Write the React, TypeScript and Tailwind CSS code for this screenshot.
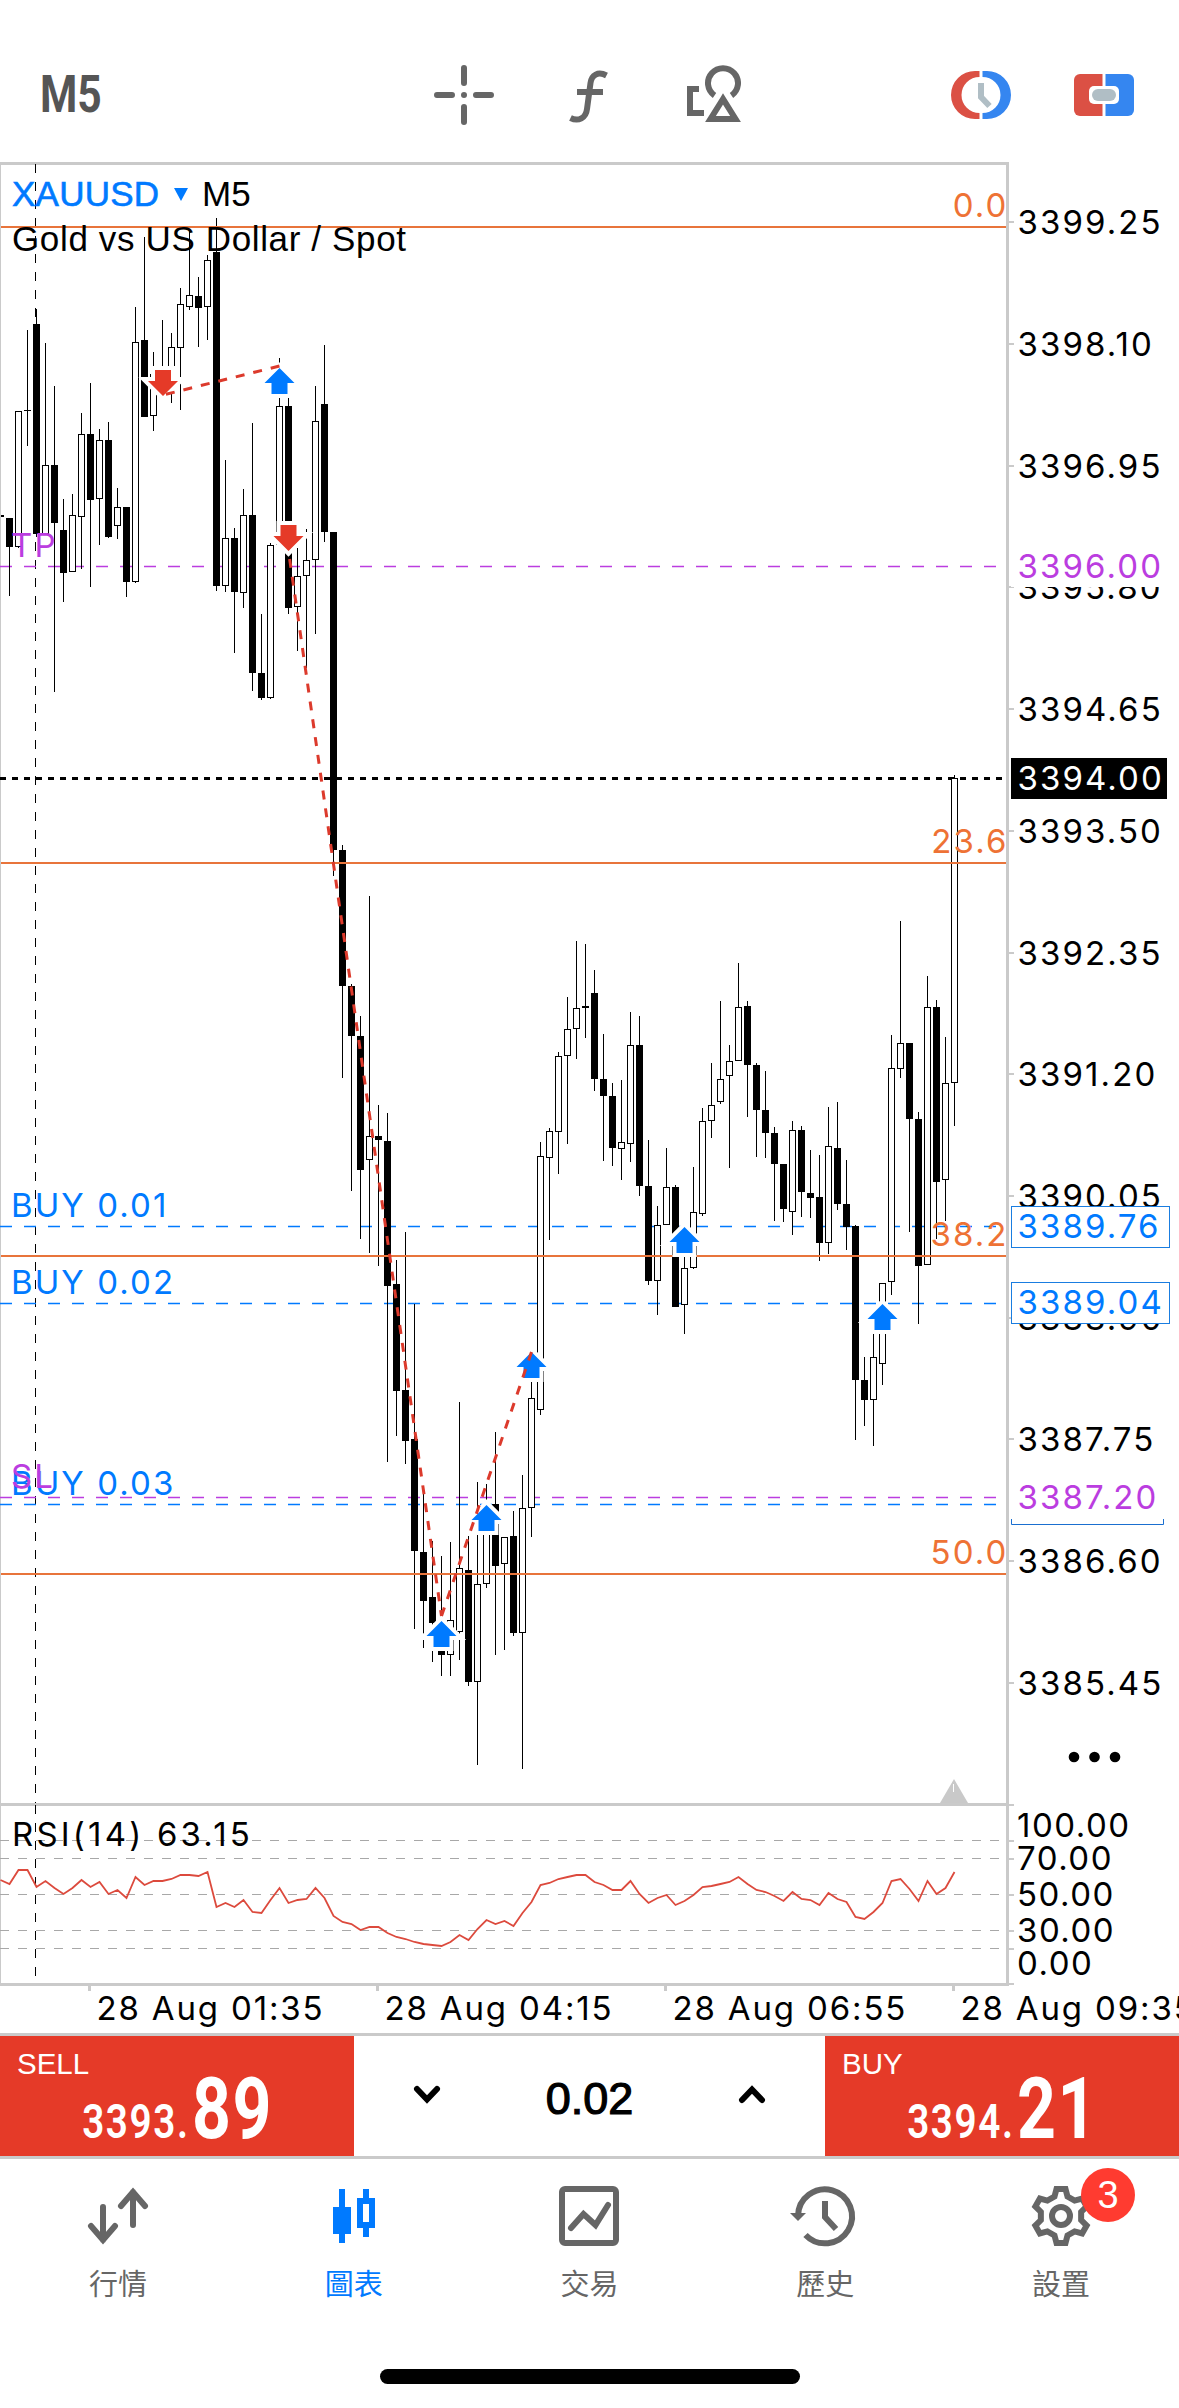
import { clsx } from "clsx";
import type { ReactNode } from "react";

// [high, body top, body bottom, low, type] - type 1 is a bearish (filled) bar
type Candle = [number, number, number, number, 0 | 1];

const STEP = 9;

const candles: Candle[] = [
  [518, 518, 547, 596, 1],
  [411, 411, 547, 548, 0],
  [330, 410, 411, 446, 1],
  [309, 324, 534, 537, 1],
  [343, 465, 534, 534, 0],
  [386, 465, 523, 692, 1],
  [499, 530, 573, 602, 1],
  [494, 515, 572, 572, 0],
  [413, 434, 517, 569, 0],
  [383, 434, 500, 587, 1],
  [429, 440, 499, 545, 0],
  [422, 440, 537, 538, 1],
  [488, 507, 526, 539, 0],
  [507, 507, 582, 597, 1],
  [307, 342, 582, 583, 0],
  [237, 340, 417, 417, 1],
  [352, 374, 416, 431, 0],
  [320, 374, 395, 395, 1],
  [333, 347, 385, 403, 0],
  [288, 304, 348, 410, 0],
  [231, 295, 307, 310, 0],
  [277, 296, 308, 347, 1],
  [255, 260, 307, 340, 0],
  [218, 252, 586, 591, 1],
  [460, 538, 586, 592, 0],
  [528, 538, 592, 653, 1],
  [489, 515, 593, 608, 0],
  [423, 515, 673, 691, 1],
  [614, 673, 698, 700, 1],
  [543, 545, 698, 699, 0],
  [358, 406, 545, 545, 0],
  [397, 406, 608, 614, 1],
  [548, 576, 607, 651, 0],
  [529, 560, 576, 668, 0],
  [386, 421, 560, 634, 0],
  [345, 404, 532, 542, 1],
  [532, 532, 850, 876, 1],
  [845, 850, 986, 1078, 1],
  [984, 986, 1036, 1191, 1],
  [1016, 1036, 1170, 1239, 1],
  [896, 1136, 1160, 1253, 0],
  [1105, 1136, 1140, 1266, 1],
  [1113, 1141, 1286, 1462, 1],
  [1260, 1284, 1391, 1436, 1],
  [1232, 1390, 1441, 1464, 1],
  [1304, 1439, 1551, 1629, 1],
  [1494, 1552, 1601, 1648, 1],
  [1541, 1597, 1623, 1662, 1],
  [1556, 1623, 1655, 1676, 1],
  [1542, 1620, 1655, 1676, 0],
  [1402, 1568, 1632, 1660, 0],
  [1536, 1570, 1682, 1686, 1],
  [1482, 1584, 1682, 1765, 0],
  [1484, 1505, 1584, 1588, 0],
  [1432, 1504, 1566, 1655, 1],
  [1537, 1537, 1564, 1650, 0],
  [1511, 1536, 1633, 1636, 1],
  [1475, 1508, 1633, 1769, 0],
  [1370, 1398, 1508, 1537, 0],
  [1142, 1156, 1410, 1415, 0],
  [1128, 1131, 1158, 1240, 0],
  [1052, 1056, 1132, 1174, 0],
  [997, 1029, 1056, 1144, 0],
  [941, 1008, 1029, 1059, 0],
  [944, 1006, 1008, 1038, 1],
  [970, 993, 1079, 1091, 1],
  [1034, 1079, 1096, 1161, 1],
  [1083, 1096, 1148, 1166, 1],
  [1080, 1142, 1149, 1180, 0],
  [1012, 1045, 1144, 1162, 0],
  [1016, 1045, 1186, 1196, 1],
  [1140, 1186, 1281, 1285, 1],
  [1206, 1225, 1281, 1315, 0],
  [1148, 1187, 1225, 1225, 0],
  [1185, 1187, 1307, 1307, 1],
  [1250, 1268, 1305, 1334, 0],
  [1167, 1212, 1268, 1269, 0],
  [1108, 1121, 1214, 1216, 0],
  [1063, 1105, 1121, 1138, 0],
  [1001, 1079, 1102, 1104, 0],
  [1045, 1061, 1076, 1168, 0],
  [963, 1007, 1061, 1061, 0],
  [1001, 1006, 1065, 1117, 1],
  [1063, 1065, 1110, 1157, 1],
  [1071, 1110, 1133, 1158, 1],
  [1127, 1133, 1164, 1221, 1],
  [1164, 1164, 1209, 1222, 1],
  [1121, 1130, 1212, 1235, 0],
  [1126, 1130, 1192, 1217, 1],
  [1150, 1193, 1198, 1218, 1],
  [1155, 1197, 1243, 1261, 1],
  [1107, 1146, 1243, 1254, 0],
  [1102, 1148, 1204, 1210, 1],
  [1160, 1204, 1227, 1250, 1],
  [1225, 1226, 1380, 1440, 1],
  [1357, 1380, 1400, 1426, 1],
  [1333, 1357, 1400, 1446, 0],
  [1283, 1283, 1364, 1385, 0],
  [1035, 1068, 1282, 1295, 0],
  [921, 1043, 1069, 1078, 0],
  [1043, 1043, 1119, 1232, 1],
  [1112, 1119, 1266, 1324, 1],
  [976, 1007, 1265, 1265, 0],
  [1000, 1007, 1182, 1239, 1],
  [1037, 1083, 1180, 1221, 0],
  [775, 778, 1083, 1126, 0],
];

const rsi = [
  1880, 1884, 1870, 1870, 1887, 1881, 1888, 1894, 1888, 1880, 1887, 1882, 1894, 1890, 1898, 1877,
  1885, 1881, 1881, 1879, 1875, 1875, 1876, 1872, 1907, 1903, 1907, 1900, 1912, 1913, 1900, 1888,
  1903, 1900, 1899, 1888, 1898, 1916, 1922, 1924, 1930, 1927, 1927, 1933, 1937, 1939, 1942, 1944,
  1945, 1946, 1942, 1935, 1940, 1929, 1920, 1924, 1921, 1926, 1913, 1902, 1885, 1883, 1879, 1877,
  1875, 1875, 1882, 1885, 1890, 1890, 1881, 1894, 1903, 1898, 1895, 1905, 1901, 1895, 1887, 1886,
  1884, 1882, 1877, 1884, 1890, 1892, 1896, 1901, 1892, 1899, 1900, 1905, 1893, 1899, 1902, 1917,
  1919, 1912, 1903, 1881, 1879, 1889, 1901, 1881, 1894, 1888, 1872,
];

const prices = [
  "3399.25",
  "3398.10",
  "3396.95",
  "3395.80",
  "3394.65",
  "3393.50",
  "3392.35",
  "3391.20",
  "3390.05",
  "3388.90",
  "3387.75",
  "3386.60",
  "3385.45",
];

const fibLevels = [
  { label: "0.0", y: 227 },
  { label: "23.6", y: 863 },
  { label: "38.2", y: 1256 },
  { label: "50.0", y: 1574 },
];

const tradeLevels = [
  { label: "TP", y: 566, color: "#bb3de0" },
  { label: "BUY 0.01", y: 1226, color: "#007aff" },
  { label: "BUY 0.02", y: 1303, color: "#007aff" },
  { label: "BUY 0.03", y: 1504, color: "#007aff" },
  { label: "SL", y: 1497, color: "#bb3de0" },
];

const rsiLevels = [1840, 1858, 1894, 1930, 1948];

const rsiLabels = [
  { label: "100.00", y: 1837 },
  { label: "70.00", y: 1869.5 },
  { label: "50.00", y: 1905.5 },
  { label: "30.00", y: 1941.5 },
  { label: "0.00", y: 1974.5 },
];

const dates = [
  { label: "28 Aug 01:35", x: 88 },
  { label: "28 Aug 04:15", x: 376 },
  { label: "28 Aug 06:55", x: 664 },
  { label: "28 Aug 09:35", x: 952 },
];

const buys = [
  [279.5, 368],
  [684.5, 1227],
  [441.5, 1621],
  [486.5, 1505],
  [531.5, 1352],
  [882.5, 1304],
];

const sells = [
  [163, 396],
  [288.5, 551],
];

interface ArrowProps {
  x: number;
  y: number;
  down?: boolean;
}

function Arrow({ x, y, down }: ArrowProps) {
  const points = "0,0 15,15 8,15 8,26 -8,26 -8,15 -15,15";
  return (
    <g transform={`translate(${x} ${y}) scale(1 ${down ? -1 : 1})`}>
      <polygon points={points} fill="#fff" stroke="#fff" strokeWidth="8" />
      <polygon points={points} fill={down ? "#e53a28" : "#007aff"} />
    </g>
  );
}

function Bar({ candle, index }: { candle: Candle; index: number }) {
  const [high, top, bottom, low, filled] = candle;
  const x = 6 + index * STEP;
  return (
    <g>
      <rect x={x + 3} y={high} width="1" height={low - high} />
      {filled ? (
        <rect x={x} y={top} width="7" height={Math.max(bottom - top, 1)} />
      ) : (
        <rect x={x + 0.5} y={top + 0.5} width="6" height={bottom - top - 1} fill="#fff" stroke="#000" />
      )}
    </g>
  );
}

interface PriceTagProps {
  label: string;
  y: number;
  height: number;
  width: number;
  color: string;
  border?: string;
  fill?: string;
}

function PriceTag({ label, y, height, width, color, border, fill = "#fff" }: PriceTagProps) {
  return (
    <g>
      <rect x="1011.5" y={y + 0.5} width={width} height={height} fill={fill} stroke={border ?? fill} />
      <text x="1017.5" y={y + 32} fill={color}>
        {label}
      </text>
    </g>
  );
}

function Chart() {
  return (
    <svg
      viewBox="0 162 1179 1871"
      className="block h-[1871px] w-full shrink-0 font-['Inter',sans-serif] text-[33px] tracking-[2.1px]"
    >
      {/* frame */}
      <g fill="#cacaca" shapeRendering="crispEdges">
        <rect x="0" y="162" width="1" height="1824" />
        <rect x="0" y="162" width="1009" height="3" />
        <rect x="0" y="1803" width="1009" height="3" />
        <rect x="0" y="1983" width="1009" height="3" />
        <rect x="1006" y="162" width="3" height="1824" />
        {prices.map((price, i) => (
          <rect key={price} x="1009" y={Math.round(221.3 + i * 121.7)} width="5" height="2" />
        ))}
        {[1804, ...rsiLevels, 1983].map((y) => (
          <rect key={y} x="1009" y={y} width="5" height="2" />
        ))}
        {dates.map(({ x }) => (
          <rect key={x} x={x} y="1986" width="3" height="5" />
        ))}
      </g>

      {/* day separator */}
      <g stroke="#000" strokeDasharray="9 9">
        <path d="M35.5 164V1803" />
        <path d="M35.5 1805V1983" />
      </g>

      {tradeLevels.map(({ label, y, color }) => (
        <path key={label} d={`M0 ${y + 0.5}H1002`} stroke={color} strokeWidth="1.3" strokeDasharray="12 12" />
      ))}
      <path d="M0 778.5H1006" stroke="#000" strokeWidth="3" strokeDasharray="6 6" />

      <g shapeRendering="crispEdges">
        <rect x="1" y="515" width="3" height="2" />
        {candles.map((candle, i) => (
          <Bar key={i} candle={candle} index={i} />
        ))}
      </g>

      {fibLevels.map(({ label, y }) => (
        <g key={label}>
          <path d={`M1 ${y}H1006`} stroke="#e8743b" strokeWidth="2" />
          <text x="1008.5" y={y - 10.5} fill="#ee7235" textAnchor="end">
            {label}
          </text>
        </g>
      ))}

      {buys.map(([x, y]) => (
        <Arrow key={x} x={x} y={y} />
      ))}
      {sells.map(([x, y]) => (
        <Arrow key={x} x={x} y={y} down />
      ))}
      <g stroke="#dc3a2c" strokeWidth="3" strokeDasharray="9 9" fill="none">
        <path d="M163 395L279.5 366" strokeDashoffset="-3" />
        <path d="M288.5 551L441.5 1616" strokeDashoffset="-8" />
        <path d="M441.5 1616L531.5 1352" />
      </g>

      {tradeLevels.map(({ label, y, color }) => (
        <text key={label} x="11" y={y - 9.5} fill={color}>
          {label}
        </text>
      ))}

      {/* price axis */}
      {prices.map((price, i) => (
        <text key={price} x="1017.5" y={234.3 + i * 121.7}>
          {price}
        </text>
      ))}
      <PriceTag label="3396.00" y={546} width={156} height={40} color="#bb3de0" />
      <PriceTag label="3394.00" y={758} width={155} height={40} color="#fff" fill="#000" />
      <PriceTag label="3389.76" y={1206} width={158} height={41} color="#007aff" border="#1a7de0" />
      <PriceTag label="3389.04" y={1282} width={158} height={41} color="#007aff" border="#1a7de0" />
      <path d="M1011.5 1519V1524.5H1163.5V1519" fill="none" stroke="#1a6fd0" />
      <PriceTag label="3387.20" y={1477} width={156} height={41} color="#bb3de0" />

      <g className="font-['Liberation_Sans',Arial,sans-serif] text-[35px] tracking-normal">
        <text x="12" y="206" fill="#007aff" stroke="#007aff" strokeWidth=".6" textLength="147">
          XAUUSD
        </text>
        <polygon points="174,188 188,188 181,201" fill="#007aff" />
        <text x="202" y="206">
          M5
        </text>
        <text x="12" y="250.5" textLength="394">
          Gold vs US Dollar / Spot
        </text>
      </g>

      {/* last bar marker and axis menu */}
      <polygon points="954,1779 968,1803 940,1803" fill="#c9c9c9" />
      <path d="M953.5 1784V1792" stroke="#fff" />
      <circle cx="1074" cy="1757" r="5.3" />
      <circle cx="1094.5" cy="1757" r="5.3" />
      <circle cx="1115" cy="1757" r="5.3" />

      {/* RSI */}
      {rsiLevels.map((y) => (
        <path key={y} d={`M0 ${y + 0.5}H1002`} stroke="#a8a8a8" strokeDasharray="9 9" />
      ))}
      <polyline
        points={rsi.map((y, i) => `${0.5 + i * STEP},${y}`).join(" ")}
        fill="none"
        stroke="#dc4a3d"
        strokeWidth="1.8"
      />
      <text x="12" y="1846" textLength="240">
        RSI(14) 63.15
      </text>
      {rsiLabels.map(({ label, y }) => (
        <text key={label} x="1017" y={y} className="tracking-[1.5px]">
          {label}
        </text>
      ))}

      {dates.map(({ label, x }) => (
        <text key={label} x={x + 8.5} y="2019.5" className="tracking-[1.85px]">
          {label}
        </text>
      ))}
    </svg>
  );
}

function Toolbar() {
  return (
    <header className="flex h-[162px] shrink-0 items-end pb-[37px] pl-10">
      <span className="w-[394px]">
        <span className="inline-block origin-left scale-x-[.82] font-['Roboto',sans-serif] text-[52px] leading-[60px] font-bold text-[#555]">
          M5
        </span>
      </span>
      <div className="flex flex-1 items-center">
        <svg viewBox="0 0 60 60" className="size-[60px] shrink-0" fill="none" stroke="#666" strokeWidth="6" strokeLinecap="round">
          <path d="M30 3V18M30 42V57M3 30H18M42 30H57" />
          <path d="M30 30h.01" />
        </svg>
        <svg viewBox="0 0 40 60" className="ml-[75px] h-[60px] w-10 shrink-0" fill="none" stroke="#666" strokeWidth="6">
          <path d="M37.5 10.5C29 6 22.5 10 21.5 18L18 44C17 53 9.5 57 1.5 53" />
          <path d="M8 27H34" />
        </svg>
        <svg viewBox="0 0 60 60" className="ml-[72px] size-[60px] shrink-0" fill="none" stroke="#666" strokeWidth="6">
          <path d="M33.5 30.5A15 15 0 1 1 50.5 30.5" />
          <path d="M18 24H9V48H23" />
          <polygon points="42,34 29.5,54 54.5,54" />
        </svg>
      </div>
      <svg viewBox="0 0 60 60" className="size-[60px] shrink-0">
        <path d="M28.5 6H24A24 24 0 0 0 24 54H28.5V48A18 18 0 0 1 28.5 12Z" fill="#db5044" />
        <path d="M31.5 6H36A24 24 0 0 1 36 54H31.5V48A18 18 0 0 0 31.5 12Z" fill="#3586f0" />
        <path d="M30 18V32L38.5 41" fill="none" stroke="#b0bec5" strokeWidth="6" />
      </svg>
      <svg viewBox="0 0 60 60" className="mr-[45px] ml-[63px] size-[60px] shrink-0">
        <path d="M28.5 9H6A6 6 0 0 0 0 15V45A6 6 0 0 0 6 51H28.5Z" fill="#db5044" />
        <path d="M31.5 9H54A6 6 0 0 1 60 15V45A6 6 0 0 1 54 51H31.5Z" fill="#3586f0" />
        <rect x="15" y="21" width="30" height="18" rx="5" fill="#fff" />
        <rect x="18" y="24" width="24" height="12" rx="6" fill="#b0bec5" />
      </svg>
    </header>
  );
}

interface QuoteProps {
  side: string;
  price: string;
  pips: string;
}

function Quote({ side, price, pips }: QuoteProps) {
  return (
    <button className="flex h-full w-[354px] shrink-0 flex-col bg-[#e53a28] pt-3 text-left text-white">
      <span className="pl-[17px] font-['Liberation_Sans',Arial,sans-serif] text-[29.5px] leading-8">{side}</span>
      <span className="-mt-[11px] flex origin-left scale-x-[.79] items-baseline pl-[104px] font-['Roboto',sans-serif] leading-[80px]">
        <span className="text-[49px] font-semibold tracking-[2px]">{price}</span>
        <span className="ml-[3px] text-[86px] font-bold tracking-[2px]">{pips}</span>
      </span>
    </button>
  );
}

function TradeBar() {
  return (
    <section className="flex h-[126px] shrink-0 items-center justify-between border-y-[3px] border-[#cacaca]">
      <Quote side="SELL" price="3393." pips="89" />
      <div className="flex flex-1 items-center justify-between px-[58px]">
        <svg viewBox="0 0 30 24" className="h-6 w-[30px]" fill="none" stroke="#000" strokeWidth="6" strokeLinecap="round">
          <path d="M5 5L15 15.5L25 5" />
        </svg>
        <span className="pt-[5px] font-['Liberation_Sans',Arial,sans-serif] text-[45px] leading-none [-webkit-text-stroke:1.2px_black]">
          0.02
        </span>
        <svg viewBox="0 0 30 24" className="h-6 w-[30px]" fill="none" stroke="#000" strokeWidth="6" strokeLinecap="round">
          <path d="M5 16L15 5.5L25 16" />
        </svg>
      </div>
      <Quote side="BUY" price="3394." pips="21" />
    </section>
  );
}

const teeth = [0, 60, 120, 180, 240, 300];

// outline of a six-toothed gear centred on 30,30
const gearPoints = teeth
  .flatMap((deg) => {
    const a = (deg * Math.PI) / 180;
    return [
      [-6.5, -19.5],
      [-4.5, -27],
      [4.5, -27],
      [6.5, -19.5],
    ].map(([x, y]) => `${30 + x * Math.cos(a) - y * Math.sin(a)},${30 + x * Math.sin(a) + y * Math.cos(a)}`);
  })
  .join(" ");

interface Tab {
  label: string;
  icon: ReactNode;
  active?: boolean;
  badge?: number;
}

const tabs: Tab[] = [
  {
    label: "行情",
    icon: (
      <g strokeLinecap="round">
        <path d="M15 21V54M3 40L15 54L27 40" />
        <path d="M45 39V6M33 20L45 6L57 20" />
      </g>
    ),
  },
  {
    label: "圖表",
    active: true,
    icon: (
      <>
        <path d="M18 3V57M42 3V15M42 39V51" />
        <rect x="9" y="21" width="18" height="27" fill="currentColor" stroke="none" />
        <rect x="36" y="15" width="12" height="24" />
      </>
    ),
  },
  {
    label: "交易",
    icon: (
      <>
        <rect x="3" y="3" width="54" height="54" rx="3" />
        <path d="M12 42L24.5 28L36.5 39L49 19" strokeLinecap="round" />
      </>
    ),
  },
  {
    label: "歷史",
    icon: (
      <>
        <path d="M3 30A27 27 0 1 1 10.5 49" />
        <path d="M30 15V31L41 43" />
        <polygon points="-5,27 11,27 3,35" fill="currentColor" stroke="none" />
      </>
    ),
  },
  {
    label: "設置",
    badge: 3,
    icon: (
      <>
        <polygon points={gearPoints} />
        <circle cx="30" cy="30" r="9" />
      </>
    ),
  },
];

function TabBar() {
  return (
    <nav className="flex h-[170px] shrink-0 pt-[27px]">
      {tabs.map(({ label, icon, active, badge }) => (
        <div
          key={label}
          className={clsx(
            "relative flex flex-1 flex-col items-center",
            active ? "text-[#007aff]" : "text-[#666]",
          )}
        >
          <svg viewBox="0 0 60 60" className="size-[60px] overflow-visible" fill="none" stroke="currentColor" strokeWidth="6">
            {icon}
          </svg>
          <span className="mt-4 font-['Noto_Sans_CJK_TC',sans-serif] text-[29px] leading-10">{label}</span>
          {badge && (
            <span className="absolute -top-[18px] left-[138px] flex size-[54px] items-center justify-center rounded-full bg-[#ff3b30] font-['Liberation_Sans',Arial,sans-serif] text-[38px] text-white">
              {badge}
            </span>
          )}
        </div>
      ))}
    </nav>
  );
}

export default function App() {
  return (
    <div className="flex h-[2408px] w-[1179px] flex-col overflow-hidden bg-white text-black">
      <Toolbar />
      <Chart />
      <TradeBar />
      <TabBar />
      <div className="mx-auto mt-10 h-[15px] w-[420px] shrink-0 rounded-full bg-black" />
    </div>
  );
}
